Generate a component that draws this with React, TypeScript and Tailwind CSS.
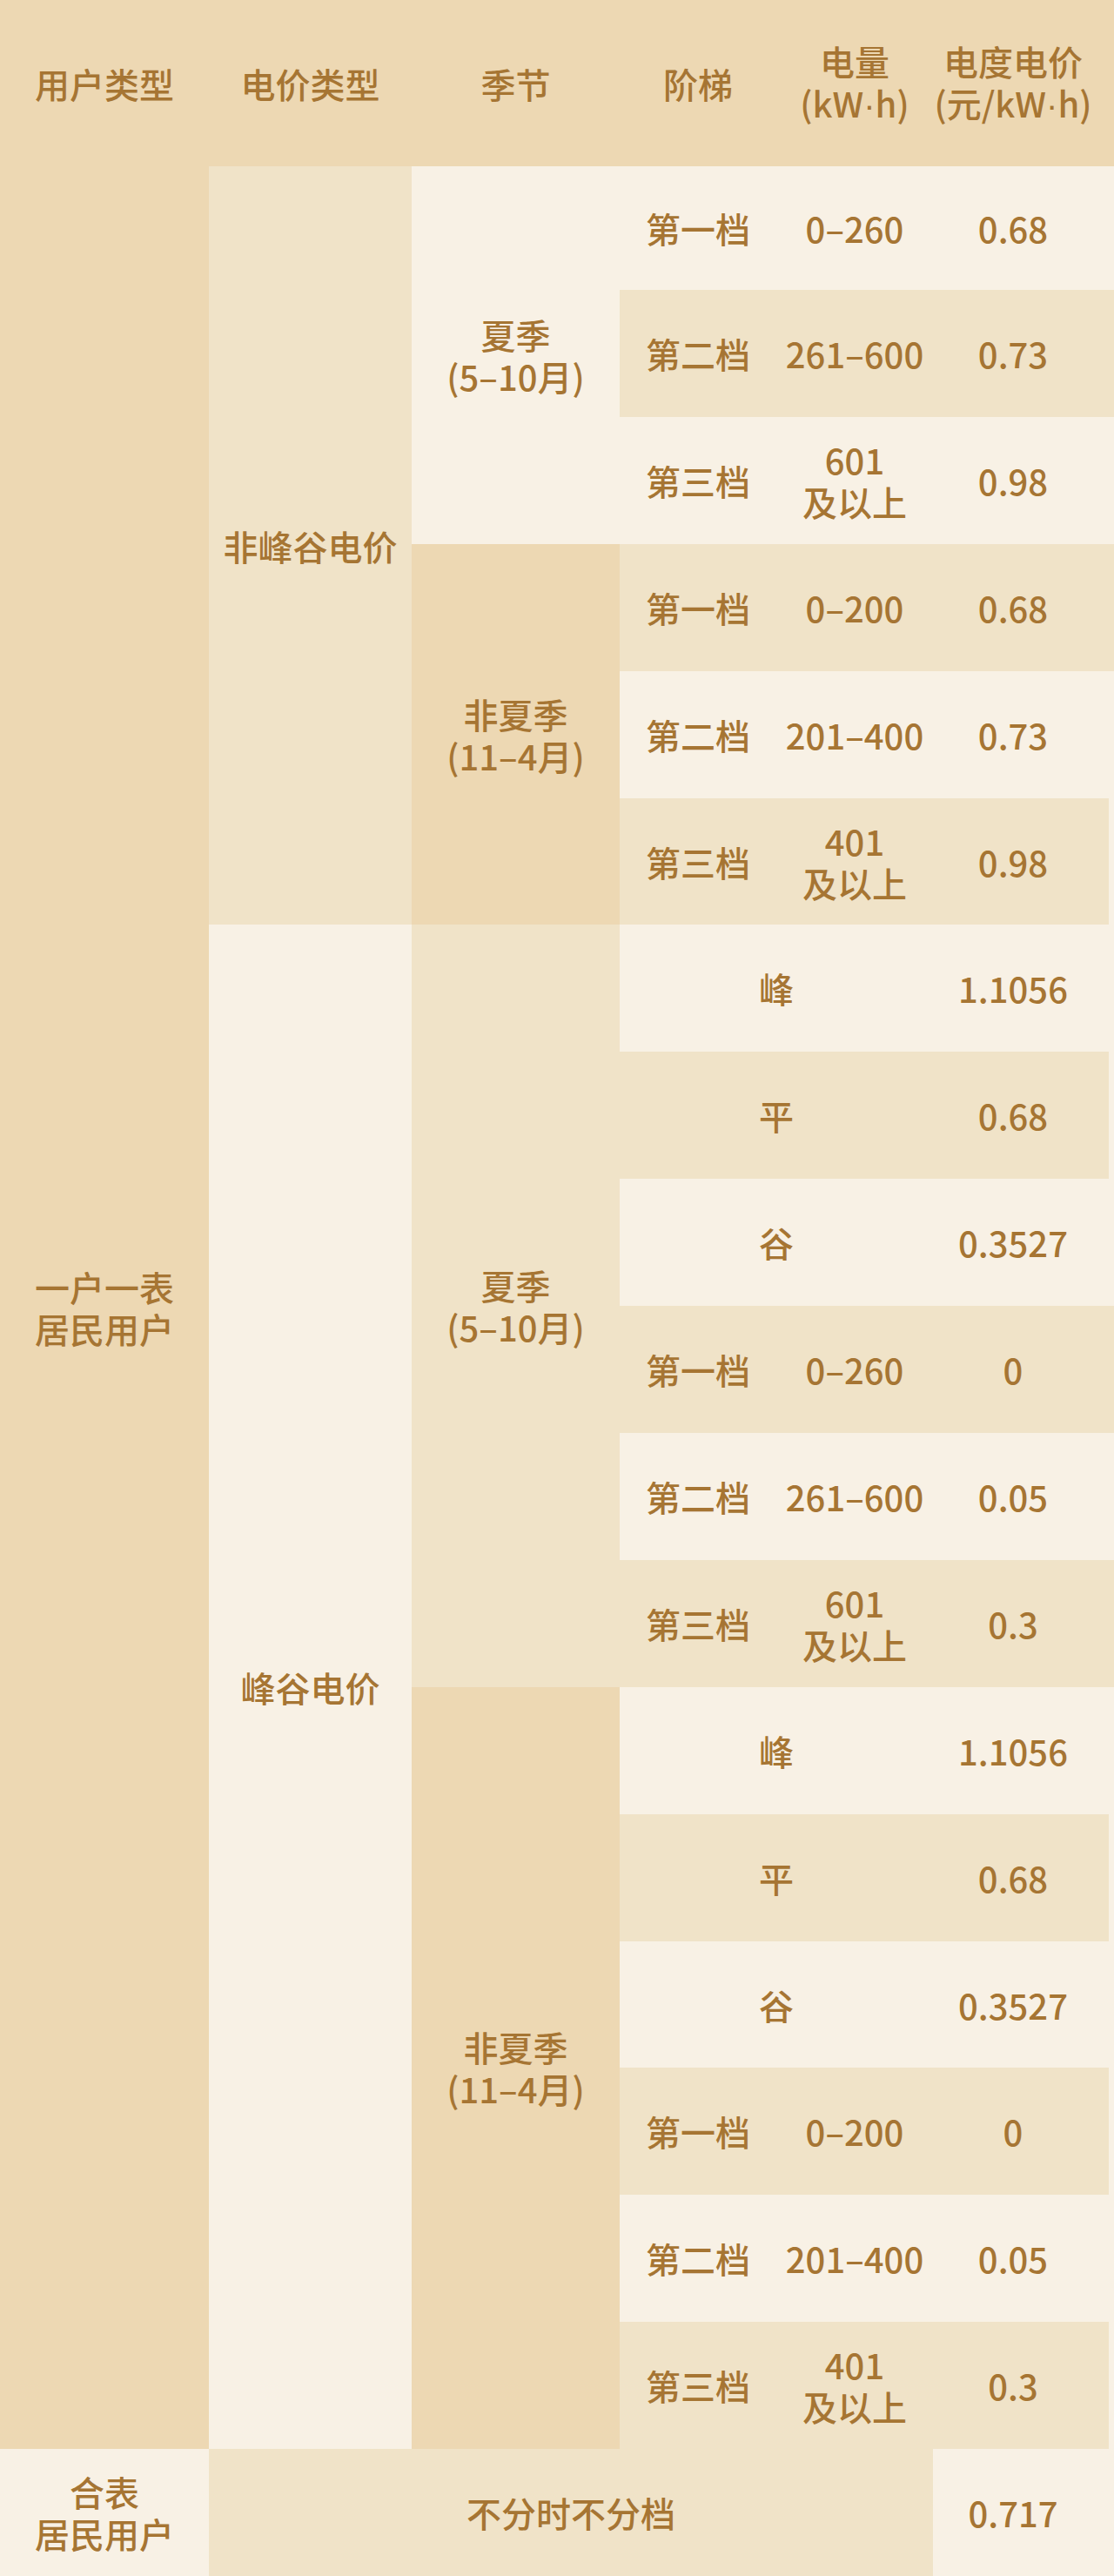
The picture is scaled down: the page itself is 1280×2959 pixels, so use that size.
import React from "react";

const H = "bg-[#EDD8B3]";
const T = "bg-[#F0E3C8]";
const C = "bg-[#F8F1E5]";

function Cell({ className = "", children }: { className?: string; children?: React.ReactNode }) {
  return (
    <div className={`flex flex-col items-center justify-center text-center leading-[1.2] ${className}`}>
      {children}
    </div>
  );
}

function Last({ bg, short, children }: { bg: string; short?: boolean; children?: React.ReactNode }) {
  return (
    <div className={`flex items-center ${short ? "pr-[6px] bg-[#F8F1E5]" : bg}`}>
      <div className={`flex h-full flex-1 items-center ${bg}`}>
        <div className="flex w-[184px] items-center justify-center text-center leading-[1.2]">{children}</div>
      </div>
    </div>
  );
}

type Tier = { label: string; range: React.ReactNode; price: string };

function TierRow({ t, bg, short }: { t: Tier; bg: string; short?: boolean }) {
  return (
    <>
      <Cell className={bg}>{t.label}</Cell>
      <Cell className={bg}>{t.range}</Cell>
      <Last bg={bg} short={short}>{t.price}</Last>
    </>
  );
}

function TouRow({ label, price, bg, short }: { label: string; price: string; bg: string; short?: boolean }) {
  return (
    <>
      <Cell className={`${bg} col-span-2`}>{label}</Cell>
      <Last bg={bg} short={short}>{price}</Last>
    </>
  );
}

const two = (a: React.ReactNode, b: React.ReactNode) => (
  <>
    <span>{a}</span>
    <span>{b}</span>
  </>
);

const Dot = () => <span className="font-['Liberation_Sans',sans-serif]">·</span>;

export default function App() {
  return (
    <div className="w-[1280px] h-[2959px] bg-[#F8F1E5] text-[#A67533] text-[40px] font-medium font-['Noto_Sans_CJK_SC','Noto_Sans',sans-serif]">
      <div className="grid h-full grid-cols-[240px_233px_239px_180px_180px_1fr] grid-rows-[191px_142px_repeat(17,145.9px)_1fr]">
        {/* header */}
        <Cell className={H}>用户类型</Cell>
        <Cell className={H}>电价类型</Cell>
        <Cell className={H}>季节</Cell>
        <Cell className={H}>阶梯</Cell>
        <Cell className={H}>{two("电量", <>(kW<Dot />h)</>)}</Cell>
        <Last bg={H}>
          <div className="flex flex-col items-center">
            {two("电度电价", <>(元/kW<Dot />h)</>)}
          </div>
        </Last>

        {/* row 1 */}
        <Cell className={`${H} row-span-18`}>{two("一户一表", "居民用户")}</Cell>
        <Cell className={`${T} row-span-6`}>非峰谷电价</Cell>
        <Cell className={`${C} row-span-3`}>{two("夏季", "(5–10月)")}</Cell>
        <TierRow t={{ label: "第一档", range: "0–260", price: "0.68" }} bg={C} />
        <TierRow t={{ label: "第二档", range: "261–600", price: "0.73" }} bg={T} />
        <TierRow t={{ label: "第三档", range: two("601", "及以上"), price: "0.98" }} bg={C} />

        <Cell className={`${H} row-span-3`}>{two("非夏季", "(11–4月)")}</Cell>
        <TierRow t={{ label: "第一档", range: "0–200", price: "0.68" }} bg={T} />
        <TierRow t={{ label: "第二档", range: "201–400", price: "0.73" }} bg={C} />
        <TierRow t={{ label: "第三档", range: two("401", "及以上"), price: "0.98" }} bg={T} short />

        {/* peak-valley */}
        <Cell className={`${C} row-span-12`}>峰谷电价</Cell>
        <Cell className={`${T} row-span-6`}>{two("夏季", "(5–10月)")}</Cell>
        <TouRow label="峰" price="1.1056" bg={C} />
        <TouRow label="平" price="0.68" bg={T} short />
        <TouRow label="谷" price="0.3527" bg={C} />
        <TierRow t={{ label: "第一档", range: "0–260", price: "0" }} bg={T} />
        <TierRow t={{ label: "第二档", range: "261–600", price: "0.05" }} bg={C} />
        <TierRow t={{ label: "第三档", range: two("601", "及以上"), price: "0.3" }} bg={T} />

        <Cell className={`${H} row-span-6`}>{two("非夏季", "(11–4月)")}</Cell>
        <TouRow label="峰" price="1.1056" bg={C} />
        <TouRow label="平" price="0.68" bg={T} short />
        <TouRow label="谷" price="0.3527" bg={C} />
        <TierRow t={{ label: "第一档", range: "0–200", price: "0" }} bg={T} short />
        <TierRow t={{ label: "第二档", range: "201–400", price: "0.05" }} bg={C} />
        <TierRow t={{ label: "第三档", range: two("401", "及以上"), price: "0.3" }} bg={T} short />

        {/* last row */}
        <Cell className={C}>{two("合表", "居民用户")}</Cell>
        <Cell className={`${T} col-span-4`}>不分时不分档</Cell>
        <Last bg={C}>0.717</Last>
      </div>
    </div>
  );
}
